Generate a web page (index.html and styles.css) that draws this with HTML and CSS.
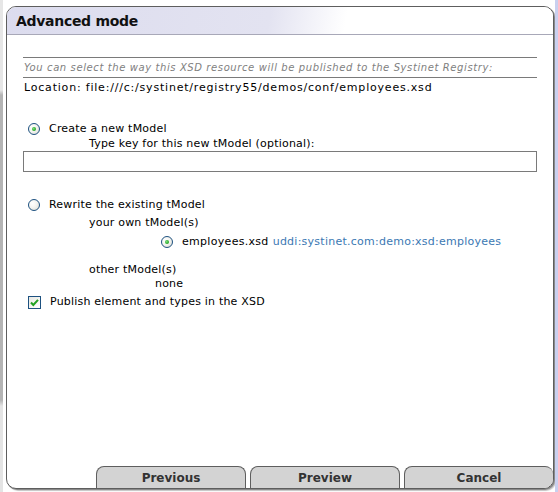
FILE: index.html
```html
<!DOCTYPE html>
<html lang="en">
<head>
  <meta charset="UTF-8">
  <title>Advanced mode</title>
  <link rel="stylesheet" href="styles.css">
</head>
<body>
  <div class="screen">
    <div class="edge-left"></div>

    <div class="dialog">
      <div class="dialog-head">Advanced mode</div>

      <div class="dialog-body">
        <p class="hint">You can select the way this XSD resource will be published to the Systinet Registry:</p>
        <p class="location">Location: file:///c:/systinet/registry55/demos/conf/employees.xsd</p>

        <div class="row option-first">
          <span class="radio checked"></span>
          <span class="label">Create a new tModel</span>
        </div>
        <p class="sub key-label">Type key for this new tModel (optional):</p>
        <input class="key-input" type="text">

        <div class="row option-second">
          <span class="radio"></span>
          <span class="label">Rewrite the existing tModel</span>
        </div>
        <p class="sub own">your own tModel(s)</p>
        <div class="row tmodel">
          <span class="radio checked"></span>
          <span class="tmodel-name">employees.xsd</span>
          <a class="tmodel-key" href="#">uddi:systinet.com:demo:xsd:employees</a>
        </div>
        <p class="sub other">other tModel(s)</p>
        <p class="none">none</p>

        <div class="row publish">
          <span class="checkbox">
            <svg width="11" height="11" viewBox="0 0 11 11">
              <path d="M2 5.5 L4.3 8 L9 2.8" fill="none" stroke="#21a121" stroke-width="2"/>
            </svg>
          </span>
          <span class="label">Publish element and types in the XSD</span>
        </div>
      </div>

      <div class="dialog-foot">
        <button class="tab">Previous</button>
        <button class="tab">Preview</button>
        <button class="tab tab-last">Cancel</button>
      </div>
    </div>

    <div class="edge-right"></div>
  </div>
</body>
</html>
```

FILE: styles.css
```css
* {
    margin: 0;
    padding: 0;
    box-sizing: border-box;
}

body {
    font-family: "DejaVu Sans", Verdana, sans-serif;
    font-size: 11px;
    line-height: 14px;
    letter-spacing: 0.2px;
    color: #000;
    background-color: #fff;
}

/* Frame around the dialog */
.screen {
    width: 558px;
    height: 492px;
    display: flex;
}

.edge-left {
    width: 3px;
    background: linear-gradient(to bottom, #e6e6e6 0, #e6e6e6 90px, #b4b4b4 95px, #b4b4b4 400px, #e4e4e4 406px);
}

.edge-right {
    width: 3px;
    margin-left: auto;
    background-color: #c9d0ef;
}

/* Dialog panel */
.dialog {
    width: 548px;
    height: 483px;
    margin: 6px 0 0 3px;
    border: 1px solid #5e5e5e;
    border-radius: 10px;
    box-shadow: 1px 1px 0 #8a8a8a, 2px 2px 1px #c4c4c4;
    overflow: hidden;
    display: flex;
    flex-direction: column;
    background-color: #fff;
}

.dialog-head {
    height: 28px;
    padding: 4px 0 0 9px;
    font-size: 14px;
    font-weight: bold;
    line-height: 20px;
    letter-spacing: -0.3px;
    color: #111;
    border-bottom: 1px solid #a8a8b8;
    background: linear-gradient(100deg, #dcdcee 0, #e3e3f1 48%, #fff 62%);
}

.dialog-body {
    padding: 0 16px;
}

.hint {
    margin-top: 22px;
    height: 21px;
    border-top: 1px solid #7a7a7a;
    border-bottom: 1px solid #7a7a7a;
    font-size: 10px;
    font-style: italic;
    line-height: 19px;
    letter-spacing: 0.6px;
    color: #808080;
    padding-left: 1px;
}

.location {
    margin-top: 3px;
    padding-left: 1px;
    letter-spacing: 0.8px;
}

.row {
    display: flex;
    align-items: center;
    height: 14px;
}

.label {
    margin-left: 9px;
}

.option-first {
    margin-top: 27px;
    padding-left: 5px;
}

.option-second {
    margin-top: 26px;
    padding-left: 5px;
}

.sub {
    padding-left: 66px;
}

.key-label {
    margin-top: 1px;
}

.key-input {
    display: block;
    width: 514px;
    height: 21px;
    border: 1px solid #7a7a7a;
    background-color: #fff;
}

.own {
    margin-top: 4px;
}

.tmodel {
    margin-top: 5px;
    padding-left: 138px;
}

.tmodel-name {
    margin-left: 9px;
    letter-spacing: 0.3px;
}

.tmodel-key {
    margin-left: 4px;
    letter-spacing: 0.25px;
    color: #3b78b3;
    text-decoration: none;
}

.other {
    margin-top: 14px;
}

.none {
    padding-left: 132px;
}

.publish {
    margin-top: 4px;
    padding-left: 5px;
}

/* XP style radio buttons and checkbox */
.radio {
    flex: none;
    width: 12px;
    height: 12px;
    border: 1px solid #1d5180;
    border-radius: 50%;
    background: radial-gradient(circle at 35% 35%, #fff 0, #f4f4f0 45%, #d8d8d0 100%);
    position: relative;
}

.radio.checked::after {
    content: "";
    position: absolute;
    left: 3px;
    top: 3px;
    width: 4px;
    height: 4px;
    border-radius: 50%;
    background: radial-gradient(circle at 40% 40%, #7be07b 0, #21a121 70%);
}

.checkbox {
    flex: none;
    width: 13px;
    height: 13px;
    border: 1px solid #1d5180;
    background: linear-gradient(135deg, #e8e8e2 0, #fff 100%);
    display: flex;
    align-items: center;
    justify-content: center;
}

/* Bottom tab buttons */
.dialog-foot {
    margin-top: auto;
    display: flex;
    justify-content: flex-end;
    gap: 4px;
}

.tab {
    width: 150px;
    height: 22px;
    border: 1px solid #5e5e5e;
    border-bottom: none;
    border-radius: 8px 8px 0 0;
    background-color: #d3d3d3;
    font-family: "DejaVu Sans", Verdana, sans-serif;
    font-size: 12px;
    font-weight: bold;
    letter-spacing: 0;
    color: #333;
    padding-top: 1px;
}

.tab-last {
    width: 149px;
    border-right: none;
}
```
